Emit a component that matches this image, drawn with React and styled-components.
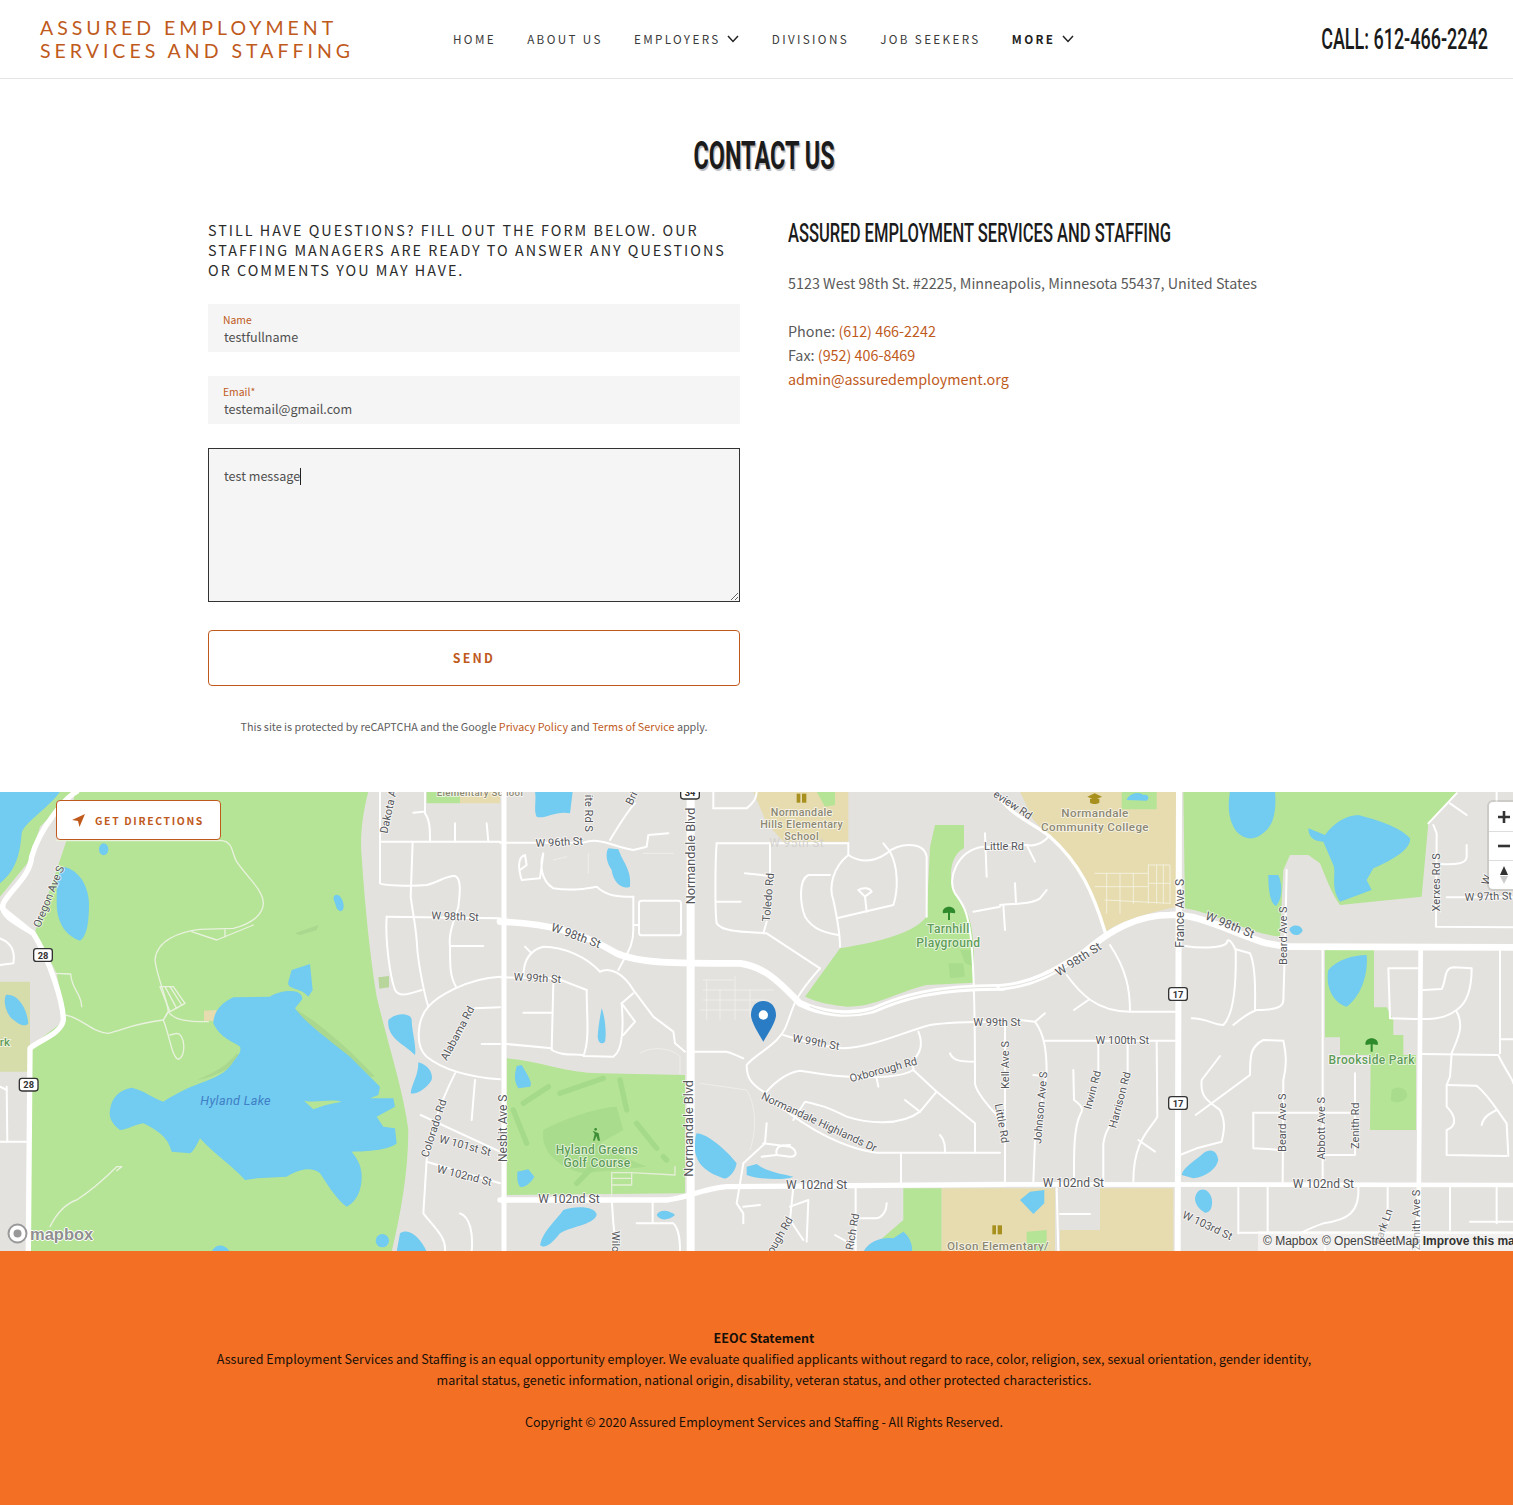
import React from 'react';
import styled, { createGlobalStyle } from 'styled-components';

const ACCENT = '#c05a1c';
const BODY_FONT = '"Noto Sans CJK SC", "Source Sans Pro", "Noto Sans", sans-serif';
const DISPLAY_FONT = '"Roboto", "Liberation Sans", sans-serif';

const GlobalStyle = createGlobalStyle`
  html, body {
    margin: 0;
    padding: 0;
    background: #fff;
    overflow-x: hidden;
  }

  body {
    font-family: ${BODY_FONT};
  }

  * {
    box-sizing: border-box;
  }
`;

const Page = styled.div`
  width: 1528px;
`;

const Header = styled.header`
  display: flex;
  align-items: center;
  height: 79px;
  padding: 0 40px;
  border-bottom: 1px solid #e4e4e4;
`;

const Logo = styled.div`
  width: 312px;
  font-family: "Lato", sans-serif;
  font-size: 19.5px;
  font-weight: 400;
  line-height: 23px;
  letter-spacing: 4px;
  white-space: nowrap;
  color: ${ACCENT};
`;

const Nav = styled.nav`
  display: flex;
  align-items: center;
  gap: 31.2px;
  margin-left: 101px;
`;

const NavItem = styled.a`
  display: flex;
  align-items: center;
  gap: 6.5px;
  font-size: 11.7px;
  line-height: 20px;
  font-weight: ${props => (props.$active ? 700 : 400)};
  letter-spacing: 2.35px;
  color: ${props => (props.$active ? '#1f1f1f' : '#3a3a3a')};
  white-space: nowrap;
`;

const ChevronIcon = styled.svg`
  margin-right: 1.5px;
`;

const Phone = styled.div`
  margin-left: auto;
  font-family: ${DISPLAY_FONT};
  font-size: 29px;
  font-weight: 500;
  line-height: 36px;
  white-space: nowrap;
  color: #1b1b1b;
  transform: scaleX(0.62);
  transform-origin: right center;
`;

const Main = styled.main`
  padding-top: 56px;
  height: 713px;
`;

const Title = styled.h1`
  margin: 0;
  height: 42px;
  text-align: center;
  font-family: ${DISPLAY_FONT};
  font-size: 38px;
  font-weight: 700;
  line-height: 42px;
  color: #1b1b1b;
  text-shadow: 2px 2px 1px #b8bcc2;
  transform: scaleX(0.617);
`;

const Columns = styled.div`
  display: grid;
  grid-template-columns: 532px 532px;
  gap: 48px;
  width: 1112px;
  margin: 43px auto 0;
`;

const Intro = styled.p`
  margin: 0 0 24px;
  font-size: 14.35px;
  line-height: 20px;
  letter-spacing: 2px;
  color: #2b2b2b;
`;

const Form = styled.form`
  display: flex;
  flex-direction: column;
`;

const Field = styled.div`
  display: flex;
  flex-direction: column;
  height: 48px;
  margin-bottom: 24px;
  padding: 9px 15px 0;
  background: #f5f5f5;
`;

const FieldLabel = styled.label`
  font-size: 10.4px;
  line-height: 14px;
  color: ${ACCENT};
`;

const FieldInput = styled.input`
  width: 100%;
  padding: 0 1px;
  border: 0;
  outline: 0;
  background: transparent;
  font-family: inherit;
  font-size: 12.6px;
  line-height: 19px;
  height: 19px;
  color: #505050;
`;

const MessageBox = styled.div`
  position: relative;
  display: flex;
  height: 154px;
`;

const Message = styled.textarea`
  width: 100%;
  height: 100%;
  padding: 17px 15px;
  border: 1px solid #333;
  border-radius: 0;
  outline: 0;
  background: #f5f5f5;
  font-family: inherit;
  font-size: 12.6px;
  line-height: 19px;
  color: #505050;
  resize: vertical;
`;

const Caret = styled.span`
  position: absolute;
  left: 92px;
  top: 20px;
  width: 1px;
  height: 17px;
  background: #222;
`;

const SendButton = styled.button`
  height: 56px;
  margin-top: 28px;
  padding-bottom: 2px;
  border: 1px solid ${ACCENT};
  border-radius: 4px;
  background: #fff;
  font-family: inherit;
  font-size: 12.4px;
  font-weight: 700;
  letter-spacing: 2.2px;
  color: ${ACCENT};
`;

const Recaptcha = styled.p`
  margin: 32px 0 0;
  text-align: center;
  font-size: 10.77px;
  line-height: 18px;
  color: #5e5e5e;
`;

const Link = styled.a`
  color: ${ACCENT};
`;

const InfoTitle = styled.h4`
  margin: 0 0 25px;
  font-family: ${DISPLAY_FONT};
  font-size: 26px;
  font-weight: 500;
  line-height: 26px;
  white-space: nowrap;
  color: #1b1b1b;
  transform: scaleX(0.637);
  transform-origin: left center;
`;

const InfoText = styled.p`
  margin: 0 0 24px;
  font-size: 14.35px;
  line-height: 24px;
  color: #5a5a5a;
`;

const MapWrap = styled.section`
  position: relative;
  height: 459px;
  overflow: hidden;
  background: #e4e2de;
`;

const MapDrawing = styled.svg`
  display: block;
`;

const DirectionsButton = styled.a`
  position: absolute;
  left: 56px;
  top: 8px;
  display: flex;
  align-items: center;
  gap: 10px;
  width: 165px;
  height: 40px;
  padding-left: 15px;
  border: 1px solid ${ACCENT};
  border-radius: 4px;
  background: #fff;
  font-size: 10.4px;
  font-weight: 700;
  letter-spacing: 1.65px;
  color: ${ACCENT};
`;

const Controls = styled.div`
  position: absolute;
  top: 10px;
  left: 1489px;
  width: 29px;
  border-radius: 4px;
  background: #fff;
  box-shadow: 0 0 0 2px rgba(0, 0, 0, 0.1);
`;

const ControlButton = styled.div`
  display: flex;
  align-items: center;
  justify-content: center;
  height: 29px;
  border-top: ${props => (props.$first ? '0' : '1px solid #ddd')};
`;

const MapboxLogo = styled.div`
  position: absolute;
  left: 7px;
  bottom: 7px;
  display: flex;
  align-items: center;
  gap: 2px;
  font-family: "Liberation Sans", sans-serif;
  font-size: 16.5px;
  font-weight: 700;
  line-height: 20px;
  color: #8f8f8f;
  text-shadow: 1px 0 0 #fff, -1px 0 0 #fff, 0 1px 0 #fff, 0 -1px 0 #fff;
`;

const Attribution = styled.div`
  position: absolute;
  left: 1258px;
  bottom: 0;
  display: flex;
  gap: 4px;
  padding: 2px 5px;
  background: rgba(255, 255, 255, 0.5);
  font-family: "Liberation Sans", sans-serif;
  font-size: 12px;
  line-height: 16px;
  white-space: nowrap;
  color: #404040;

  b {
    color: #333;
  }
`;

const Footer = styled.footer`
  height: 254px;
  padding-top: 76px;
  background: #f36f24;
  text-align: center;
  font-size: 12.55px;
  line-height: 21px;
  color: #161009;
`;

const FooterBlock = styled.p`
  width: 1112px;
  margin: 0 auto 21px;
`;

// map drawing parts
const Water = styled.path`
  fill: #72cbf0;
`;

const Park = styled.path`
  fill: #b5e496;
`;

const Campus = styled.path`
  fill: #e6dcb0;
`;

const Patch = styled.path`
  fill: ${props => props.$tint || '#a9dc8c'};
`;

const Road = styled.path`
  fill: none;
  stroke: ${props => props.$color || '#fff'};
  stroke-width: ${props => props.$w || 6}px;
  stroke-linecap: round;
  stroke-linejoin: round;
`;

const LABEL_COLORS = {
  road: '#55565a',
  water: '#3f7fc6',
  park: '#5f9c58',
  school: '#8d8872',
  faint: '#d4d2ce',
};

const MapText = styled.text`
  font-family: "Roboto", "Lato", sans-serif;
  font-size: ${props => props.$size || (props.$kind === 'road' ? 33 : 36)}px;
  font-style: ${props => (props.$kind === 'water' ? 'italic' : 'normal')};
  font-weight: ${props => (props.$kind === 'park' || props.$kind === 'school' ? 500 : 400)};
  letter-spacing: ${props => (props.$kind === 'road' ? 0 : 1)}px;
  fill: ${props => LABEL_COLORS[props.$kind]};
  stroke: rgba(255, 255, 255, 0.75);
  stroke-width: ${props => (props.$kind === 'water' || props.$kind === 'faint' ? 0 : 5)}px;
  paint-order: stroke;
  text-anchor: middle;
  dominant-baseline: central;
`;

const ShieldText = styled.text`
  font-family: "Roboto", sans-serif;
  font-size: 28px;
  font-weight: 700;
  fill: #333;
  text-anchor: middle;
  dominant-baseline: central;
`;

const Zoom = ({ x, children }) => (
  <g transform={`translate(${x} 790) scale(${1 / 3})`}>{children}</g>
);

const Roads = ({ list, w, color }) => (
  <>
    {list.map(d => <Road key={d} d={d} $w={w} $color={color} />)}
  </>
);

const Labels = ({ list }) => (
  <>
    {list.map(([text, x, y, rot = 0, kind = 'road', size]) => (
      <MapText
        key={text + x}
        x={x}
        y={y}
        $kind={kind}
        $size={size}
        transform={rot ? `rotate(${rot} ${x} ${y})` : undefined}
      >
        {text}
      </MapText>
    ))}
  </>
);

const Shield = ({ x, y, n }) => (
  <g>
    <rect x={x - 28} y={y - 19} width="56" height="38" rx="8" fill="#fff" stroke="#333" strokeWidth="4" />
    <ShieldText x={x} y={y}>{n}</ShieldText>
  </g>
);

const Tree = ({ x, y }) => (
  <g fill="#2f8a2c">
    <path d={`M${x - 18},${y} C${x - 22},${y - 12} ${x - 10},${y - 20} ${x},${y - 20} C${x + 10},${y - 20} ${x + 22},${y - 12} ${x + 18},${y} L${x + 3},${y - 2} L${x + 3},${y + 20} L${x - 3},${y + 20} L${x - 3},${y - 2} Z`} />
  </g>
);

const SchoolIcon = ({ x, y }) => (
  <g fill="#a8901e">
    <rect x={x - 15} y={y - 14} width="11" height="27" />
    <rect x={x + 1} y={y - 14} width="13" height="27" />
  </g>
);

const LEFT_ROADS = [
  'M1140,155 L1500,155', 'M1140,5 L1140,280 C1145,285 1230,290 1280,285 C1320,275 1340,255 1365,258 C1385,265 1380,310 1375,350 C1360,400 1345,430 1350,470 C1350,530 1350,560 1368,590',
  'M1238,155 L1232,320 C1240,380 1250,420 1252,480 C1258,540 1275,620 1285,650', 'M1160,380 L1500,385',
  'M1160,380 C1155,450 1170,560 1185,600 C1200,625 1230,610 1265,600', 'M1350,468 L1450,468',
  'M1285,650 C1310,620 1400,565 1500,560', 'M1285,650 C1250,690 1245,770 1280,800 C1330,840 1400,860 1500,868',
  'M1425,655 L1500,652', 'M1445,762 L1500,762', 'M1365,850 C1330,920 1290,1020 1280,1110 L1270,1270 C1300,1310 1340,1340 1335,1385',
  'M1262,975 L1500,1085', 'M1280,1115 L1500,1180', 'M1425,870 L1415,990', 'M1380,1270 C1410,1280 1420,1330 1415,1385',
  'M1275,5 L1275,70 C1290,90 1290,120 1290,155', 'M1240,68 L1270,65', 'M1365,100 L1365,155', 'M1460,100 L1465,155',
  'M0,445 C40,460 45,490 40,520 L0,525', 'M20,890 L22,1055', 'M0,890 L20,900', 'M0,1055 L78,1055',
];

const PARK_PATHS = [
  'M170,152 L665,152 C700,155 695,190 710,215 C740,260 790,300 790,340 C790,370 760,400 700,415 L600,418 C540,425 470,450 465,510 C470,560 500,620 505,665 L490,690',
  'M575,425 L650,450 L760,405', 'M675,420 L675,440',
  'M195,675 C240,680 280,730 325,730 C370,720 400,700 490,690 L505,665 C520,690 560,695 625,695',
  'M490,690 C510,740 515,800 535,808 C560,800 555,730 530,730 L510,735',
  'M480,590 L520,590 L555,640 L510,665 Z', 'M495,590 L530,655', 'M510,590 L545,645',
  'M160,550 L212,552 C215,600 245,610 245,650',
  'M150,1310 C170,1270 200,1240 230,1230 C290,1190 330,1150 350,1130 L365,1130 L350,1142',
];

const LEFT_LABELS = [
  ['Oregon Ave S', 147, 320, -68], ['Dakota Ave S', 1172, 35, -78], ['W 98th St', 1365, 380, 2],
  ['Alabama Rd', 1373, 730, -62], ['Colorado Rd', 1302, 1015, -72], ['W 101st St', 1395, 1067, 15],
  ['W 102nd St', 1393, 1157, 14], ['Hyland Lake', 707, 930, 0, 'water', 38], ['rk', 15, 757, 0, 'park', 34],
  ['Elementary School', 1440, 6, 0, 'school', 29],
];

const MID_ROADS = [
  'M0,158 L250,158 C300,140 340,170 400,180 L440,170 L445,135 L505,130', 'M330,150 C360,100 385,60 405,40',
  'M640,55 L740,55 C760,40 770,20 770,5', 'M640,5 L640,55', 'M650,160 L1045,160',
  'M650,160 C645,220 645,370 650,400 C670,430 760,425 800,430 L960,535', 'M810,160 L810,250', 'M800,395 L790,430',
  'M650,335 L722,335', 'M735,250 L810,258', 'M1045,160 L1045,195 C1000,230 985,290 1000,330 C1015,400 1020,440 1020,470',
  'M1045,195 C1090,225 1130,210 1160,190 C1190,160 1270,150 1280,200 L1280,380', 'M1150,160 L1170,185 C1195,230 1195,300 1180,345 L1010,385',
  'M990,255 L925,255 C895,270 900,340 915,380 C940,420 980,430 1015,435', 'M1075,300 C1090,290 1110,295 1115,305 L1095,320 L1100,365', 'M1075,300 L1095,320',
  'M1500,170 L1450,170 C1370,180 1340,270 1365,310 C1410,370 1425,400 1425,880 C1430,920 1500,980 1500,990',
  'M1420,365 L1500,350', 'M1455,130 L1460,260', 'M400,320 L400,420 C400,470 380,490 355,540', 'M402,405 L415,405',
  'M400,320 C360,320 320,320 290,290 C240,300 190,300 160,295 C120,270 120,220 130,190 L120,265 L65,270 C50,220 60,200 75,195 L80,225 L60,240',
  'M425,332 L535,332 Q543,332 543,340 L543,428 Q543,436 535,436 L425,436 Q417,436 417,428 L417,340 Q417,332 425,332 Z',
  'M0,562 L170,565 L260,600', 'M70,560 C70,510 90,480 130,470 C190,470 260,500 300,545', 'M75,470 L95,490',
  'M300,545 C330,530 370,550 400,600 L460,680 L520,725 L525,760 L555,785', 'M260,600 C260,680 270,750 250,798 L340,800 C370,780 370,700 365,640 L405,695 L370,735',
  'M400,610 L365,640', 'M160,580 L155,780 C190,800 220,790 250,795', 'M70,668 L155,668', 'M20,762 L155,775',
  'M585,785 L680,785 C700,790 715,800 730,805', 'M960,535 C920,580 890,620 880,650 C860,700 860,720 830,750 C800,780 760,800 740,825 C740,860 750,880 790,905',
  'M790,905 C870,980 1000,1070 1130,1088 L1500,1088', 'M800,905 C830,870 870,845 900,842 C950,850 1000,860 1050,860 C1130,865 1210,860 1240,840 L1310,905 L1425,1000 L1425,1088',
  'M850,735 C900,750 960,770 1030,775 C1120,770 1200,730 1290,705 C1350,695 1420,695 1500,695', 'M1255,725 C1270,760 1260,790 1240,810 L1240,840',
  'M1310,905 L1260,965 C1200,1010 1100,1000 1040,980 C980,950 960,945 915,935 L880,990', 'M1215,930 L1260,965', 'M1130,865 L1135,890',
  'M1350,790 C1360,815 1390,815 1425,815', 'M1320,1035 C1335,1050 1335,1070 1335,1088', 'M1203,1090 L1203,1180',
  'M800,1000 L795,1060 L730,1120 L710,1240 L730,1270 L730,1300', 'M730,1250 L780,1245', 'M790,1060 L870,1070 C890,1080 895,1100 870,1100 L830,1095 C825,1070 840,1065 870,1065',
  'M785,1100 L830,1095', 'M880,1190 L870,1290 L910,1350', 'M870,1250 L925,1230 L920,1355', 'M1067,1190 L1067,1385', 'M1067,1285 L1130,1285 C1150,1280 1160,1260 1160,1240',
  'M1005,1335 L1067,1370', 'M335,1225 L340,1300 L350,1385', 'M458,1235 L458,1300', 'M410,1300 L520,1300 C540,1320 540,1360 540,1385',
];

const LOT_LINES = [
  'M610,600 L820,600', 'M610,630 L800,630', 'M600,660 L760,660', 'M610,570 L700,570', 'M620,570 L620,690', 'M660,600 L660,690', 'M705,560 L705,690', 'M750,600 L750,680',
  'M420,790 C450,770 510,770 540,800 L540,850', 'M600,880 L740,900', 'M740,900 C770,950 770,1020 750,1080',
  'M430,190 L520,190', 'M265,190 L265,250', 'M160,210 L200,200',
];

const GOLF_CART = ['M335,1148 L395,1148 L395,1185 L335,1185 Z', 'M335,1165 L395,1165', 'M395,1148 L525,1155 L525,1130', 'M335,1185 L335,1225'];

const FAIRWAYS = ['M70,940 L145,890', 'M180,910 L310,865', 'M360,870 L380,960', 'M410,1000 L470,1075', 'M40,960 L80,1060', 'M230,1180 L280,1130', 'M490,1100 L500,1110'];

const MID_LABELS = [
  ['W 96th St', 178, 157, -3], ['Normandale Blvd', 572, 198, -90, 'road', 38], ['Normandale Blvd', 565, 1015, -90, 'road', 38],
  ['Toledo Rd', 805, 322, -85], ['W 98th St', 228, 437, 20, 'road', 36], ['W 99th St', 112, 565, 3], ['W 99th St', 948, 757, 10],
  ['Oxborough Rd', 1150, 840, -15], ['Normandale Highlands Dr', 957, 997, 25],
  ['Nesbit Ave S', 10, 1015, -90, 'road', 36], ['Hyland Greens', 291, 1079, 0, 'park'], ['Golf Course', 291, 1120, 0, 'park'],
  ['Tarnhill', 1345, 417, 0, 'park'], ['Playground', 1345, 458, 0, 'park'],
  ['W 95th St', 890, 158, 0, 'faint'], ['Normandale', 905, 67, 0, 'school', 32], ['Hills Elementary', 905, 103, 0, 'school', 32], ['School', 905, 139, 0, 'school', 32],
  ['W 102nd St', 950, 1185, 0, 'road', 36], ['W 102nd St', 207, 1228, 0, 'road', 36], ['Rich Rd', 1058, 1325, -80], ['Rough Rd', 835, 1345, -60],
  ['Wilo', 345, 1355, 90], ['ite Rd S', 265, 70, 90], ['Bri', 395, 25, -65],
];

const RIGHT_ROADS = [
  'M1300,105 L1310,130 L1308,410 L1540,412', 'M1285,100 L1370,10', 'M1350,40 L1400,75', 'M1400,165 L1400,200 C1400,220 1370,225 1320,222', 'M1340,322 L1540,322',
  'M0,345 C40,340 90,345 120,325 L140,300', 'M45,280 L48,340', 'M10,345 L15,420', 'M0,165 L80,165 C100,170 130,160 145,140', 'M80,165 L105,215',
  'M330,465 C380,540 390,600 390,665', 'M200,555 C240,610 290,665 390,665 L530,665', 'M222,660 L265,630',
  'M60,690 L105,695 C130,730 140,770 140,850 L105,1050 L100,1175', 'M105,695 L135,670', 'M135,752 L525,752', 'M295,752 L295,860', 'M383,752 L383,850',
  'M470,755 L472,980 C450,1020 400,1050 400,1175', 'M415,1050 L465,1085', 'M220,840 L222,930 C250,950 250,960 240,975 C220,1020 222,1100 222,1175',
  'M310,1175 L310,1060 C320,1000 350,990 350,990', 'M100,855 L130,858', 'M15,1175 L15,700',
  'M575,685 C620,685 640,705 670,705 C695,680 710,620 707,480 C690,440 680,450 680,460 C660,475 600,475 555,468', 'M707,478 L750,490 C770,530 765,620 765,658',
  'M860,240 L855,470 L850,630 C850,650 830,660 770,660 C740,670 720,690 700,705',
  'M660,798 L605,870 C600,920 620,930 660,960 C680,1000 670,1030 665,1055 L590,1075 L540,1095', 'M587,975 L750,855 C750,800 750,770 790,750 L850,752 C860,800 860,830 850,870 L848,1175',
  'M760,968 L1060,968', 'M760,968 L760,1075 L850,1080', 'M968,480 L968,1175', 'M1065,850 L1065,1095 L970,1095',
  'M1270,600 L1325,597 C1340,570 1330,535 1360,532 L1415,535 C1415,600 1400,640 1370,660 C1330,690 1300,690 1170,685 L1165,535 L1255,535',
  'M1370,665 C1395,710 1370,750 1355,790 L1350,860 L1340,885 L1340,950 C1370,980 1370,1010 1340,1020 L1340,1095 L1520,1098',
  'M1265,792 L1495,795 C1510,830 1540,870 1540,880', 'M1340,885 L1430,887 C1470,920 1490,960 1520,1000 L1525,1098', 'M1445,1005 C1450,980 1470,970 1490,960',
  'M1500,480 L1500,790', 'M1500,748 L1540,748', 'M715,1190 L715,1330', 'M803,1190 L803,1330', 'M715,1328 L1540,1328',
  'M1075,1190 C1080,1270 1040,1290 970,1300 C940,1310 920,1320 900,1330', 'M975,1330 L975,1385', 'M1163,1190 L1163,1300', 'M1350,1190 L1350,1320', 'M1490,1190 L1490,1300', 'M1410,1295 L1540,1295',
  'M170,1195 L175,1385', 'M180,1272 L270,1272', 'M1490,5 L1490,40',
];

const CAMPUS_LOTS = [
  'M285,250 L445,250', 'M285,290 L445,290', 'M315,330 L510,340', 'M320,250 L320,370', 'M360,250 L360,370', 'M400,250 L400,340',
  'M445,225 L510,225 L510,340', 'M445,225 L445,340', 'M470,225 L470,340', 'M490,225 L490,340', 'M445,280 L510,280',
  'M315,1225 L480,1205', 'M315,1285 L385,1285', 'M315,1225 L315,1285', 'M350,1220 L350,1285', 'M385,1215 L385,1285', 'M420,1210 L420,1255', 'M450,1205 L450,1255', 'M480,1205 L480,1255',
];

const RIGHT_LABELS = [
  ['eview Rd', 38, 45, 33], ['Normandale', 285, 68, 0, 'school', 35], ['Community College', 285, 110, 0, 'school', 35], ['Little Rd', 12, 168],
  ['France Ave S', 540, 370, -90, 'road', 36], ['W 98th St', 690, 405, 22, 'road', 36], ['W 98th St', 235, 508, -33, 'road', 36], ['Beard Ave S', 852, 437, -90],
  ['Xerxes Rd S', 1310, 277, -90], ['W 97th St', 1465, 320, -2], ['W 99th St', -9, 696], ['W 100th St', 367, 752], ['Kell Ave S', 15, 825, -90],
  ['Johnson Ave S', 122, 953, -85], ['Irwin Rd', 278, 900, -75], ['Harrison Rd', 360, 930, -75], ['Beard Ave S', 848, 998, -90],
  ['Abbott Ave S', 966, 1015, -90], ['Zenith Rd', 1068, 1007, -90], ['Brookside Park', 1115, 810, 0, 'park'],
  ['W 102nd St', 220, 1178, 0, 'road', 36], ['W 102nd St', 970, 1183, 0, 'road', 36], ['W 103rd St', 622, 1307, 25], ['Park Ln', 1150, 1310, -70],
  ['Little Rd', 5, 1000, 80], ['Zenith Ave S', 1250, 1290, -90], ['W', 1460, 270, -70], ['Olson Elementary/', -6, 1367, 0, 'school', 35],
];

const LeftMap = () => (
  <Zoom x={0}>
    <Patch $tint="#d6dcaa" d="M0,575 L90,575 L90,770 L85,845 L0,845 Z" />
    <Park d="M0,5 L225,5 L120,110 L90,210 L0,320 Z" />
    <Park d="M225,5 L1105,5 C1085,80 1080,150 1085,200 C1095,350 1110,500 1130,620 C1160,750 1210,900 1225,1020 C1225,1150 1200,1280 1175,1385 L90,1385 L90,770 L195,690 L170,550 L105,425 L170,240 L200,150 Z" />
    <Patch $tint="#a9d88e" d="M885,430 L955,405 L950,420 L900,435 Z" />
    <Patch $tint="#a9d88e" d="M890,660 C960,700 1050,780 1125,860 L1110,860 C1050,800 960,730 890,670 Z" />
    <Patch $tint="#a9d88e" d="M590,870 C640,850 680,830 710,790 L725,800 C700,830 650,860 590,870 Z" />
    <Patch $tint="#b8d69c" d="M1135,562 L1167,558 L1167,592 L1138,596 Z" />
    <Patch $tint="#e6dcb0" d="M612,662 L650,660 L650,692 L612,692 Z" />
    <Patch $tint="#e6dcb0" d="M1380,5 L1500,5 L1500,40 L1380,40 Z" />
    <Patch $tint="#b5e496" d="M1280,5 L1380,5 L1380,40 L1280,40 Z" />
    <Water d="M0,5 L180,5 C150,50 70,100 65,130 C60,190 50,240 0,280 Z" />
    <Water d="M190,230 C240,240 265,290 267,340 C267,400 260,440 240,452 C200,440 170,400 170,340 C170,290 170,250 190,230 Z" />
    <Water d="M297,178 A14,18 0 1,0 325,178 A14,18 0 1,0 297,178 Z" />
    <Water d="M1000,325 C1005,305 1025,315 1030,340 C1035,365 1020,370 1010,355 Z" />
    <Water d="M18,615 C50,610 80,650 85,700 C75,715 50,700 30,680 C15,660 10,630 18,615 Z" />
    <Water d="M875,540 L930,522 L938,600 L925,620 C900,590 860,600 865,575 Z" />
    <Water d="M1165,690 C1190,665 1235,670 1235,690 C1235,720 1250,770 1245,795 C1210,760 1160,745 1165,690 Z" />
    <Water d="M1255,817 C1285,825 1300,850 1295,870 C1280,895 1250,915 1232,910 C1235,880 1255,860 1255,817 Z" />
    <Water d="M1127,1352 A20,20 0 1,0 1167,1352 A20,20 0 1,0 1127,1352 Z" />
    <Water d="M1190,1385 L1200,1330 C1230,1310 1265,1350 1280,1385 Z" />
    <Water d="M635,1385 C645,1360 675,1360 690,1385 Z" />
    <Water d="M330,960 C335,920 360,900 395,893 C430,900 460,925 490,935 C530,910 560,895 600,880 C640,865 680,850 700,815 C715,795 725,785 720,770 C700,755 660,745 640,700 C640,670 660,640 700,622 L810,620 C830,605 870,600 890,605 C905,610 910,625 905,630 L885,655 C910,690 960,730 1050,800 C1080,830 1110,860 1140,890 L1135,915 L1110,925 L1180,925 L1185,950 L1130,980 L1150,1010 L1185,1015 L1190,1060 C1170,1080 1100,1085 1055,1085 C1075,1110 1085,1130 1085,1160 C1085,1200 1070,1235 1040,1250 C1010,1230 980,1180 960,1150 C940,1135 910,1130 860,1160 L770,1165 L735,1170 C700,1130 640,1090 600,1045 C590,1065 580,1085 570,1090 L515,1085 C505,1050 490,1030 430,1000 C400,1005 380,1020 360,1020 C340,1005 325,985 330,960 Z" />
    <Patch $tint="#b5e496" d="M912,932 C950,940 990,925 1025,935 C1000,940 970,945 940,958 Z" />
    <Roads list={LEFT_ROADS} />
    <Roads list={PARK_PATHS} w={4} color="#e9f2de" />
    <Road $w={16} d="M230,5 C200,20 120,110 95,200 C90,260 30,300 10,340 C0,370 30,390 100,430 C150,510 190,640 190,690 C185,730 120,750 90,775 L85,1385" />
    <Road $w={14} d="M0,350 L100,430" />
    <Labels list={LEFT_LABELS} />
    <Shield x={129} y={495} n="28" />
    <Shield x={86} y={884} n="28" />
  </Zoom>
);

const MiddleMap = () => (
  <Zoom x={500}>
    <Park d="M20,805 C110,810 200,850 300,850 L555,855 L555,1210 L20,1215 Z" />
    <Patch d="M130,1020 C180,990 300,950 350,950 L370,1020 L300,1060 L370,1100 L440,1130 L250,1150 C160,1130 120,1070 130,1020 Z" />
    <Roads list={FAIRWAYS} w={16} color="#a6da8b" />
    <Park d="M915,620 L1020,475 C1100,460 1230,440 1280,380 L1290,170 L1305,105 L1392,105 L1392,175 C1350,195 1340,270 1370,320 C1410,370 1425,400 1422,578 L1280,585 C1180,610 1130,650 1040,650 C1000,645 960,640 915,620 Z" />
    <Patch d="M1345,520 L1390,520 L1395,560 L1350,565 Z" />
    <Patch d="M1380,480 L1420,480 L1420,530 L1395,520 Z" />
    <Park d="M1100,1385 L1210,1290 L1210,1195 L1325,1195 L1325,1385 Z" />
    <Campus d="M760,5 L1045,5 L1045,155 L850,155 L800,100 Z" />
    <Park d="M950,5 L1005,5 L1005,45 L975,50 Z" />
    <Campus d="M1325,1195 L1510,1195 L1510,1385 L1325,1385 Z" />
    <Water d="M105,5 L218,5 L210,70 C170,60 130,90 110,80 C100,60 110,30 105,5 Z" />
    <Water d="M325,175 L355,178 C370,220 395,240 390,290 C370,300 340,280 335,240 C320,220 315,190 325,175 Z" />
    <Water d="M305,655 C315,680 320,730 315,755 C305,765 295,760 293,740 C295,710 300,680 305,655 Z" />
    <Water d="M50,828 L65,825 C80,850 100,880 90,890 L55,895 C40,870 45,850 50,828 Z" />
    <Water d="M52,1145 L85,1138 L103,1160 C95,1175 75,1195 60,1190 C50,1175 52,1160 52,1145 Z" />
    <Water d="M590,1030 C620,1030 680,1080 710,1120 C705,1150 680,1170 670,1165 C630,1150 590,1130 585,1080 C585,1060 585,1040 590,1030 Z" />
    <Water d="M740,1130 L770,1122 C800,1145 840,1150 880,1160 C860,1170 780,1170 740,1155 Z" />
    <Water d="M470,1275 C480,1255 510,1262 525,1275 C510,1290 480,1295 470,1275 Z" />
    <Water d="M120,1365 C130,1320 170,1290 190,1260 C230,1245 290,1250 290,1275 C280,1305 210,1310 180,1330 C150,1370 130,1375 120,1365 Z" />
    <Water d="M1090,1385 C1110,1350 1150,1340 1180,1345 L1210,1325 C1230,1340 1240,1370 1235,1385 Z" />
    <Roads list={LOT_LINES} w={3} color="#efeeea" />
    <Roads list={MID_ROADS} />
    <Roads list={GOLF_CART} w={4} color="#e4eed6" />
    <Road $w={15} d="M12,5 L12,1385" />
    <Road $w={20} d="M0,395 C150,400 250,430 350,490 C420,520 520,520 720,520 C800,530 850,590 900,640 C960,670 1040,680 1120,660 C1200,625 1300,590 1510,592" />
    <Road $w={3} $color="#e4e2de" d="M930,650 C990,675 1060,680 1120,660 C1200,625 1300,590 1510,592" />
    <Road $w={16} d="M0,1230 L500,1230 C560,1225 610,1195 680,1190 L1510,1183" />
    <Road $w={24} d="M572,5 L572,1385" />
    <Labels list={MID_LABELS} />
    <Shield x={570} y={8} n="34" />
    <Tree x={1347} y={370} />
    <SchoolIcon x={905} y={25} />
    <g fill="#3e8f37">
      <circle cx="287" cy="1018" r="4" />
      <path d="M278,1022 L296,1030 L300,1052 L294,1052 L289,1038 L284,1052 L279,1052 L284,1032 Z" />
    </g>
    <path d="M790,633 C768,633 753,650 753,675 C753,695 775,730 790,755 C805,730 828,695 828,675 C828,650 812,633 790,633 Z" fill="#2a7dc4" />
    <circle cx="790" cy="675" r="14" fill="#fff" />
  </Zoom>
);

const RightMap = () => (
  <Zoom x={1000}>
    <Campus d="M60,5 L530,5 L530,350 C440,370 370,390 315,425 C290,350 260,260 150,140 L100,90 Z" />
    <Park d="M365,5 L470,5 L470,58 L365,58 Z" />
    <Roads list={CAMPUS_LOTS} w={3} color="#f4f0dc" />
    <Park d="M550,5 L1370,5 L1285,100 L1265,320 L1020,345 C1000,320 980,270 960,220 L925,195 L870,195 L850,240 L840,440 C740,430 650,370 555,355 Z" />
    <Park d="M975,480 L1122,480 L1122,652 L1160,652 L1180,690 L1180,735 L1210,735 L1210,795 L1248,795 L1248,1020 L1110,1020 L1112,795 L1020,795 L1020,742 L975,742 Z" />
    <Patch d="M1175,900 C1195,885 1220,895 1222,915 C1220,935 1185,945 1172,930 Z" />
    <Campus d="M0,1195 L165,1195 L165,1385 L0,1385 Z" />
    <Campus d="M300,1195 L520,1195 L520,1385 L180,1385 L180,1320 L300,1320 Z" />
    <Park d="M80,1325 L140,1320 L140,1385 L80,1385 Z" />
    <Water d="M380,30 C390,5 420,5 430,15 C445,10 450,25 440,32 Z" />
    <Water d="M690,5 L825,5 C830,60 820,100 800,120 C770,150 740,155 710,125 C690,100 680,60 690,5 Z" />
    <Water d="M925,115 L975,135 C1000,100 1040,75 1075,75 C1130,90 1200,110 1230,145 C1235,175 1180,210 1120,235 L1100,270 L1115,300 L1020,335 C990,290 1010,250 1000,225 L970,155 C940,155 925,140 925,115 Z" />
    <Water d="M805,255 L835,255 C850,290 845,330 828,348 C810,340 805,300 805,255 Z" />
    <Water d="M868,420 C870,405 900,400 908,420 C905,435 880,445 868,420 Z" />
    <Water d="M985,540 C1010,510 1060,495 1100,495 C1105,560 1080,620 1040,650 C1000,640 975,590 985,540 Z" />
    <Water d="M545,1155 C550,1130 590,1110 610,1090 C630,1075 650,1080 655,1110 C650,1135 620,1160 580,1165 Z" />
    <Water d="M585,1225 C590,1190 625,1190 635,1225 C640,1250 630,1270 615,1268 C600,1260 585,1245 585,1225 Z" />
    <Water d="M60,1230 L90,1205 L133,1200 L133,1240 L100,1272 Z" />
    <Roads list={RIGHT_ROADS} />
    <Road $w={10} d="M0,25 C40,80 100,100 150,140 C240,220 280,310 315,425" />
    <Road $w={18} d="M537,5 L533,1385" />
    <Road $w={20} d="M0,592 C100,585 170,540 250,490 C350,400 440,375 510,375 C600,370 700,430 800,460 L860,470 L1540,472" />
    <Road $w={3} $color="#e4e2de" d="M0,592 C100,585 170,540 200,525" />
    <Road $w={14} d="M0,1183 L1540,1185" />
    <Road $w={14} d="M1262,480 L1255,1385" />
    <Labels list={RIGHT_LABELS} />
    <Shield x={534} y={612} n="17" />
    <Shield x={534} y={939} n="17" />
    <Tree x={1115} y={765} />
    <SchoolIcon x={-8} y={1320} />
    <path d="M262,20 L284,10 L306,20 L284,30 Z" fill="#a8901e" />
    <path d="M270,27 L298,27 L298,38 C290,43 278,43 270,38 Z" fill="#a8901e" />
  </Zoom>
);

const Chevron = () => (
  <ChevronIcon width="12" height="8" viewBox="0 0 12 8">
    <polyline points="1,1 6,6.5 11,1" fill="none" stroke="#222" strokeWidth="1.5" />
  </ChevronIcon>
);

export default function App() {
  return (
    <Page>
      <GlobalStyle />
      <Header>
        <Logo>ASSURED EMPLOYMENT<br />SERVICES AND STAFFING</Logo>
        <Nav>
          <NavItem>HOME</NavItem>
          <NavItem>ABOUT US</NavItem>
          <NavItem>EMPLOYERS <Chevron /></NavItem>
          <NavItem>DIVISIONS</NavItem>
          <NavItem>JOB SEEKERS</NavItem>
          <NavItem $active>MORE <Chevron /></NavItem>
        </Nav>
        <Phone>CALL: 612-466-2242</Phone>
      </Header>
      <Main>
        <Title>CONTACT US</Title>
        <Columns>
          <div>
            <Intro>STILL HAVE QUESTIONS? FILL OUT THE FORM BELOW. OUR STAFFING MANAGERS ARE READY TO ANSWER ANY QUESTIONS OR COMMENTS YOU MAY HAVE.</Intro>
            <Form>
              <Field>
                <FieldLabel>Name</FieldLabel>
                <FieldInput defaultValue="testfullname" />
              </Field>
              <Field>
                <FieldLabel>Email*</FieldLabel>
                <FieldInput defaultValue="testemail@gmail.com" />
              </Field>
              <MessageBox>
                <Message defaultValue="test message" />
                <Caret />
              </MessageBox>
              <SendButton type="button">SEND</SendButton>
            </Form>
            <Recaptcha>
              This site is protected by reCAPTCHA and the Google <Link>Privacy Policy</Link> and <Link>Terms of Service</Link> apply.
            </Recaptcha>
          </div>
          <div>
            <InfoTitle>ASSURED EMPLOYMENT SERVICES AND STAFFING</InfoTitle>
            <InfoText>5123 West 98th St. #2225, Minneapolis, Minnesota 55437, United States</InfoText>
            <InfoText>
              Phone: <Link>(612) 466-2242</Link><br />
              Fax: <Link>(952) 406-8469</Link><br />
              <Link>admin@assuredemployment.org</Link>
            </InfoText>
          </div>
        </Columns>
      </Main>
      <MapWrap>
        <MapDrawing width="1528" height="459" viewBox="0 792 1528 459">
          <LeftMap />
          <MiddleMap />
          <RightMap />
        </MapDrawing>
        <DirectionsButton>
          <svg width="13" height="13" viewBox="0 0 13 13">
            <path d="M13,0 L0,6 L6,7 L7.5,13 Z" fill={ACCENT} />
          </svg>
          GET DIRECTIONS
        </DirectionsButton>
        <Controls>
          <ControlButton $first>
            <svg width="12" height="12" viewBox="0 0 12 12"><path d="M6,0 V12 M0,6 H12" stroke="#333" strokeWidth="2.6" /></svg>
          </ControlButton>
          <ControlButton>
            <svg width="12" height="12" viewBox="0 0 12 12"><path d="M0,6 H12" stroke="#333" strokeWidth="2.6" /></svg>
          </ControlButton>
          <ControlButton>
            <svg width="10" height="20" viewBox="0 0 10 20">
              <path d="M5,1 L9,10 L1,10 Z" fill="#333" />
              <path d="M5,19 L9,11 L1,11 Z" fill="#ccc" />
            </svg>
          </ControlButton>
        </Controls>
        <MapboxLogo>
          <svg width="21" height="21" viewBox="0 0 21 21">
            <circle cx="10.5" cy="10.5" r="9" fill="#fff" stroke="#999" strokeWidth="2" />
            <circle cx="10.5" cy="10.5" r="4" fill="#999" />
          </svg>
          mapbox
        </MapboxLogo>
        <Attribution>
          <span>© Mapbox</span>
          <span>© OpenStreetMap</span>
          <b>Improve this map</b>
        </Attribution>
      </MapWrap>
      <Footer>
        <FooterBlock>
          <b>EEOC Statement</b><br />
          Assured Employment Services and Staffing is an equal opportunity employer. We evaluate qualified applicants without regard to race, color, religion, sex, sexual orientation, gender identity, marital status, genetic information, national origin, disability, veteran status, and other protected characteristics.
        </FooterBlock>
        <FooterBlock>Copyright © 2020 Assured Employment Services and Staffing - All Rights Reserved.</FooterBlock>
      </Footer>
    </Page>
  );
}
